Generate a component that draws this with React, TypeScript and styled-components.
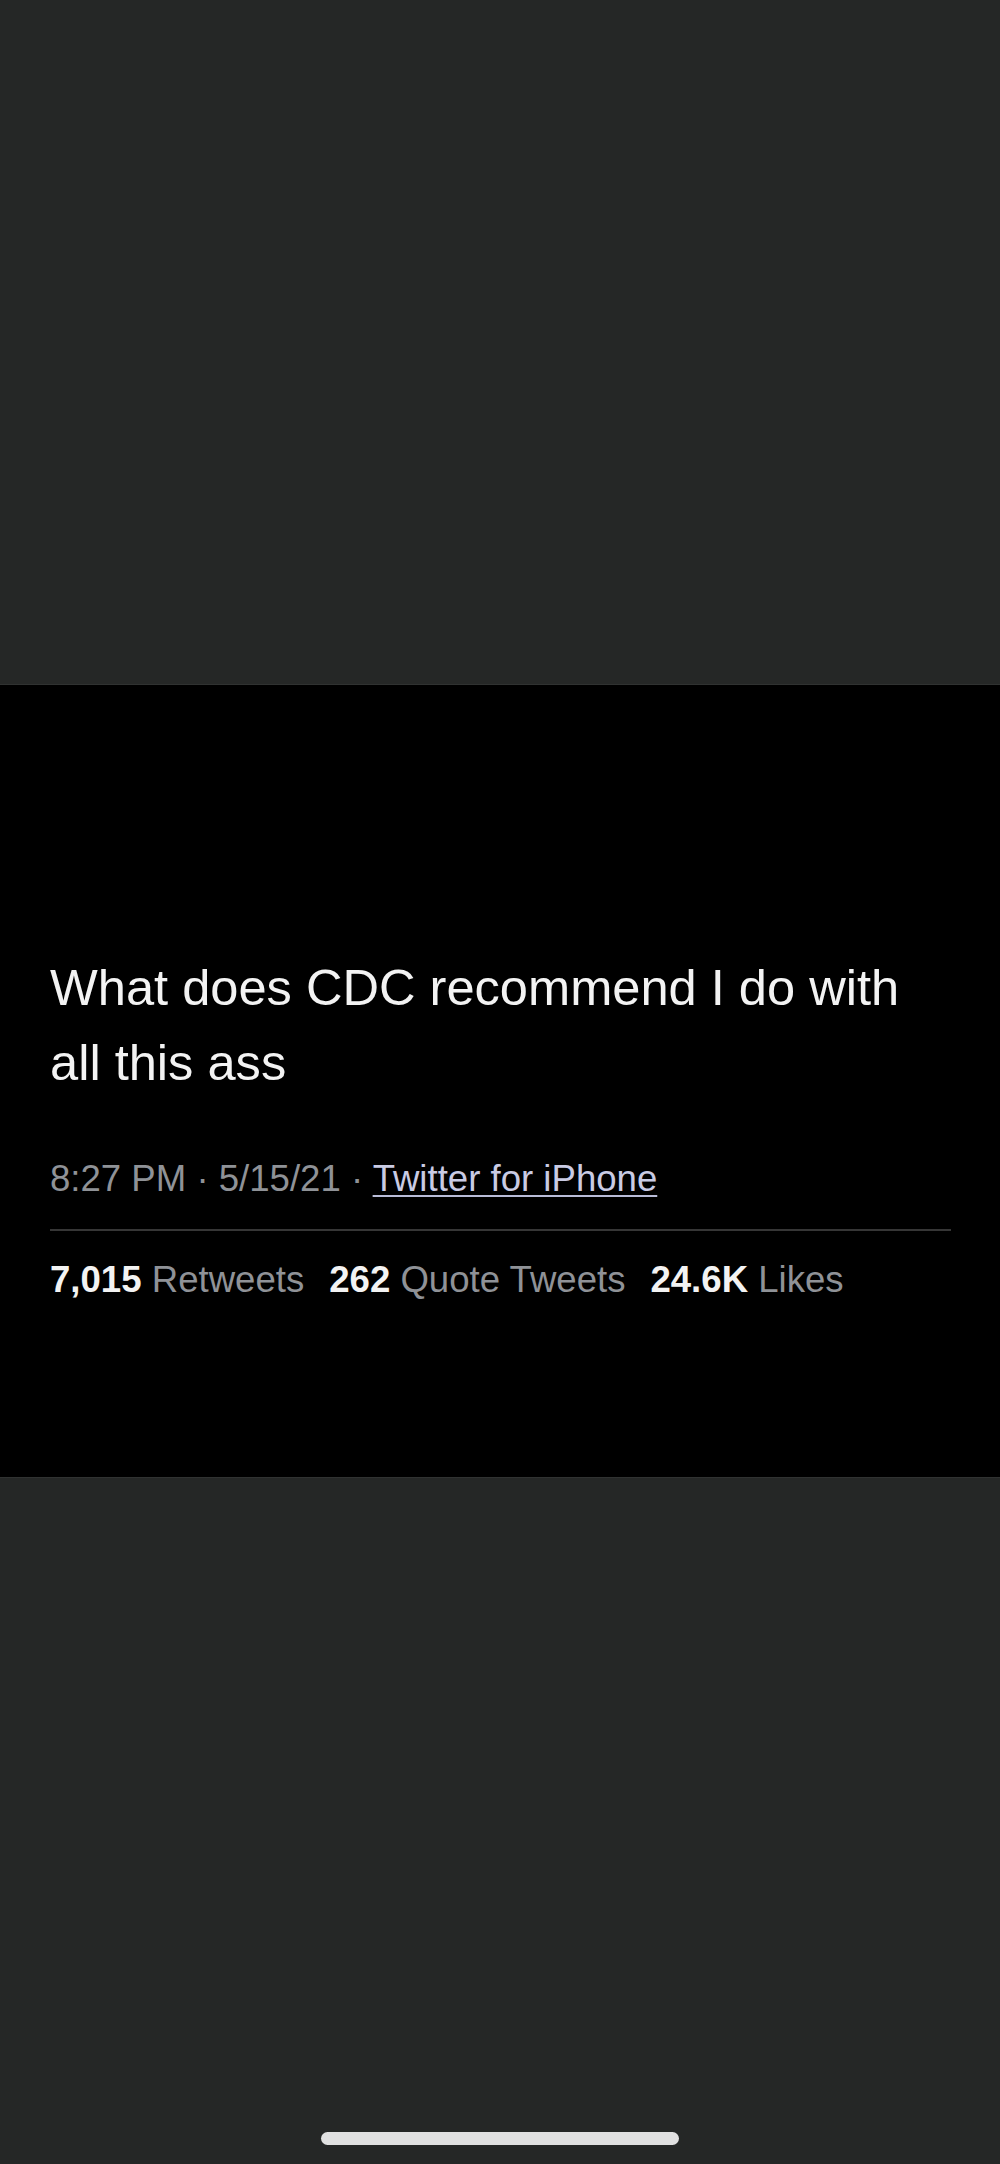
import * as React from "react";
import styled, { createGlobalStyle } from "styled-components";

const GlobalStyle = createGlobalStyle`
  html, body {
    margin: 0;
    padding: 0;
    background: #252726;
  }
`;

const stats = [
  { count: "7,015", label: "Retweets" },
  { count: "262", label: "Quote Tweets" },
  { count: "24.6K", label: "Likes" },
];

export default function App() {
  return (
    <>
      <GlobalStyle />
      <Screen>
        <TopArea />
        <TweetBand>
          <TweetText>
            What does CDC recommend I do with
            <br />
            all this ass
          </TweetText>
          <Meta>
            8:27 PM · 5/15/21 · <Source>Twitter for iPhone</Source>
          </Meta>
          <Divider />
          <StatsRow>
            {stats.map((s) => (
              <Stat key={s.label}>
                <Count>{s.count}</Count> {s.label}
              </Stat>
            ))}
          </StatsRow>
        </TweetBand>
        <BottomArea>
          <HomeIndicator />
        </BottomArea>
      </Screen>
    </>
  );
}

const Screen = styled.div`
  display: flex;
  flex-direction: column;
  width: 1000px;
  height: 2164px;
  background: #252726;
  font-family: "Liberation Sans", Arial, sans-serif;
`;

const TopArea = styled.div`
  height: 684px;
  border-bottom: 1px solid #303231;
`;

const TweetBand = styled.div`
  height: 792px;
  box-sizing: border-box;
  padding: 265px 49px 0 50px;
  background: #000;
`;

const TweetText = styled.div`
  font-size: 50.6px;
  line-height: 75px;
  color: #f3f3f3;
`;

const Meta = styled.div`
  margin-top: 57px;
  font-size: 36.6px;
  line-height: 44px;
  color: #8f9297;
`;

const Source = styled.span`
  color: #c9cbe4;
  text-decoration: underline;
  text-decoration-color: #b9bcd8;
  text-decoration-thickness: 2px;
  text-underline-offset: 4px;
`;

const Divider = styled.div`
  height: 2px;
  margin-top: 28px;
  background: #363636;
`;

const StatsRow = styled.div`
  display: flex;
  gap: 25px;
  margin-top: 27px;
  font-size: 36.6px;
  line-height: 44px;
`;

const Stat = styled.span`
  color: #8f9297;
  white-space: pre;
`;

const Count = styled.b`
  color: #f3f3f3;
  font-weight: 700;
`;

const BottomArea = styled.div`
  flex: 1;
  display: flex;
  flex-direction: column;
  justify-content: flex-end;
  align-items: center;
  padding-bottom: 19px;
  border-top: 1px solid #303231;
`;

const HomeIndicator = styled.div`
  width: 358px;
  height: 13px;
  border-radius: 7px;
  background: #e1e1e1;
`;
